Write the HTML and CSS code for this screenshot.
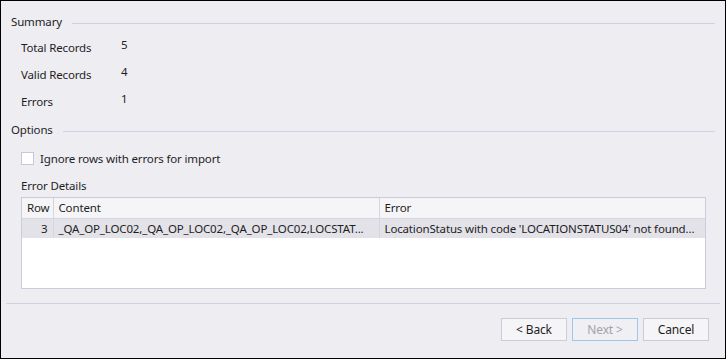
FILE: index.html
```html
<!doctype html>
<html lang="en">
    <head>
        <meta charset="UTF-8">
        <title>Import Summary</title>
        <link rel="stylesheet" href="styles.css">
    </head>
    <body>
        <div class="dialog">
            <div class="group-title"><span>Summary</span><span class="rule"></span></div>
            <div class="summary">
                <div class="summary-row"><span class="label">Total Records</span><span class="value">5</span></div>
                <div class="summary-row"><span class="label">Valid Records</span><span class="value">4</span></div>
                <div class="summary-row"><span class="label">Errors</span><span class="value">1</span></div>
            </div>
            <div class="group-title options"><span>Options</span><span class="rule"></span></div>
            <label class="check-row"><span class="checkbox"></span><span>Ignore rows with errors for import</span></label>
            <div class="details-title">Error Details</div>
            <div class="grid">
                <table>
                    <thead>
                        <tr>
                            <th class="col-row">Row</th>
                            <th class="col-content">Content</th>
                            <th class="col-error">Error</th>
                        </tr>
                    </thead>
                    <tbody>
                        <tr class="selected">
                            <td class="num">3</td>
                            <td>_QA_OP_LOC02,_QA_OP_LOC02,_QA_OP_LOC02,LOCSTAT...</td>
                            <td>LocationStatus with code 'LOCATIONSTATUS04' not found...</td>
                        </tr>
                    </tbody>
                </table>
            </div>
            <div class="separator"></div>
            <div class="buttons">
                <button class="btn">&lt; Back</button>
                <button class="btn disabled">Next &gt;</button>
                <button class="btn">Cancel</button>
            </div>
        </div>
    </body>
</html>
```

FILE: styles.css
```css
* {
    box-sizing: border-box;
}
html, body {
    margin: 0;
    padding: 0;
}
body {
    width: 726px;
    height: 359px;
    border: 1px solid #000;
    background-color: #eeedf2;
    font-family: "Noto Sans", sans-serif;
    font-size: 11.5px;
    letter-spacing: -0.15px;
    color: #1e1e1e;
}
.dialog {
    padding-top: 13px;
}
.group-title {
    display: flex;
    align-items: center;
    height: 16px;
    line-height: 16px;
    padding-left: 10px;
    padding-right: 10px;
    gap: 10px;
}
.group-title .rule {
    flex: 1;
    height: 1px;
    margin-top: 2px;
    background-color: #d3d1e1;
}
.summary {
    margin-top: 4px;
    padding-left: 20px;
}
.summary-row {
    display: flex;
    height: 27px;
    line-height: 27px;
}
.summary-row .label {
    width: 100px;
}
.summary-row .value {
    position: relative;
    top: -3px;
}
.group-title.options {
    margin-top: 7px;
}
.check-row {
    display: flex;
    align-items: center;
    gap: 6px;
    height: 20px;
    margin-top: 10px;
    padding-left: 20px;
}
.checkbox {
    width: 13px;
    height: 13px;
    border: 1px solid #c9c8d6;
    background-color: #fff;
}
.details-title {
    height: 16px;
    line-height: 16px;
    margin-top: 10px;
    padding-left: 20px;
}
.grid {
    margin: 3px 20px 0 20px;
    width: 685px;
    height: 92px;
    border: 1px solid #cccbdd;
    background-color: #fff;
}
table {
    width: 100%;
    border-collapse: collapse;
    table-layout: fixed;
}
th, td {
    height: 20px;
    padding: 0 5px;
    text-align: left;
    font-weight: normal;
    white-space: nowrap;
    overflow: hidden;
    border-left: 1px solid #d6d5e2;
}
th:first-child, td:first-child {
    border-left: none;
}
th {
    background-color: #f5f5f8;
    border-bottom: 1px solid #d6d5e2;
}
.col-row {
    width: 31px;
}
.col-content {
    width: 326px;
}
.selected td {
    background-color: #e3e2e8;
}
td.num {
    text-align: right;
}
.separator {
    height: 1px;
    margin: 14px 5px 0 5px;
    background-color: #d3d1e1;
}
.buttons {
    display: flex;
    justify-content: flex-end;
    gap: 5px;
    margin-top: 14px;
    padding-right: 16px;
}
.btn {
    width: 66px;
    height: 23px;
    padding: 0;
    border: 1px solid #cccbd6;
    background-color: #f5f5f8;
    font-family: inherit;
    font-size: 12px;
    letter-spacing: inherit;
    color: #1e1e1e;
}
.btn.disabled {
    border-color: #9cc8ea;
    background-color: #f0eff4;
    color: #a3a3a8;
}
```
